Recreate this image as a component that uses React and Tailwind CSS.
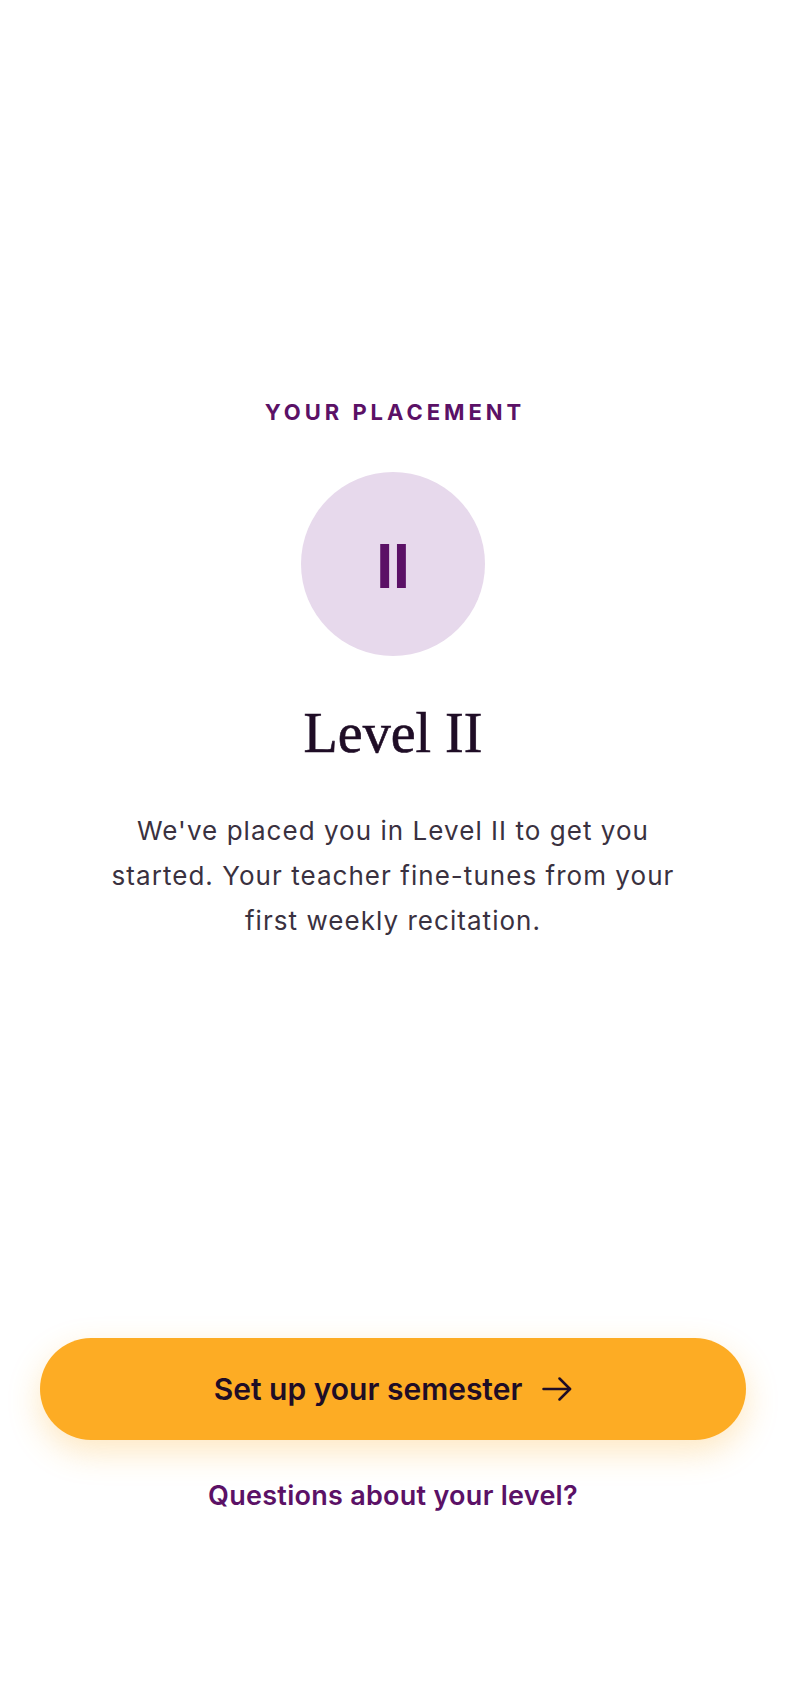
import React from 'react';

function ArrowIcon() {
  return (
    <svg width="30" height="24" viewBox="0 0 30 24" fill="none" stroke="currentColor" strokeWidth="2.5" strokeLinecap="round" strokeLinejoin="round">
      <path d="M1.5 12H28" />
      <path d="M17.5 1.5L28 12L17.5 22.5" />
    </svg>
  );
}

export default function App() {
  return (
    <div className="h-[1704px] w-full bg-white flex flex-col font-['Inter',sans-serif]">
      <section className="pt-[398px] flex flex-col items-center text-center">
        <p className="text-[22px] leading-[28px] font-bold tracking-[0.18em] pl-[0.18em] text-[#5b1166]">
          YOUR PLACEMENT
        </p>

        <div className="mt-[46px] w-[184px] h-[184px] rounded-full bg-[#e7d9ec] flex items-center justify-center">
          <span className="text-[60px] leading-none font-bold text-[#5b1166] mt-[4px]">II</span>
        </div>

        <h1 className="mt-[44px] font-['Liberation_Serif',serif] text-[56px] leading-[67px] text-[#1f0d26] [-webkit-text-stroke:0.6px_#1f0d26]">
          Level II
        </h1>

        <p className="mt-[41px] max-w-[580px] text-[26px] leading-[45px] tracking-[0.04em] text-[#3a3140]">
          We've placed you in Level II to get you started. Your teacher fine-tunes from your first weekly recitation.
        </p>
      </section>

      <section className="mt-auto px-10 pb-[192px] flex flex-col items-center">
        <button className="w-full h-[102px] rounded-full bg-[#fdac24] text-[#1f0d26] flex items-center justify-center gap-[20px] shadow-[0_12px_32px_rgba(253,172,36,0.28)]">
          <span className="text-[30px] font-semibold">Set up your semester</span>
          <ArrowIcon />
        </button>
        <a href="#" className="mt-[40px] text-[27px] leading-[32px] font-semibold tracking-[0.01em] text-[#5b1166]">
          Questions about your level?
        </a>
      </section>
    </div>
  );
}
